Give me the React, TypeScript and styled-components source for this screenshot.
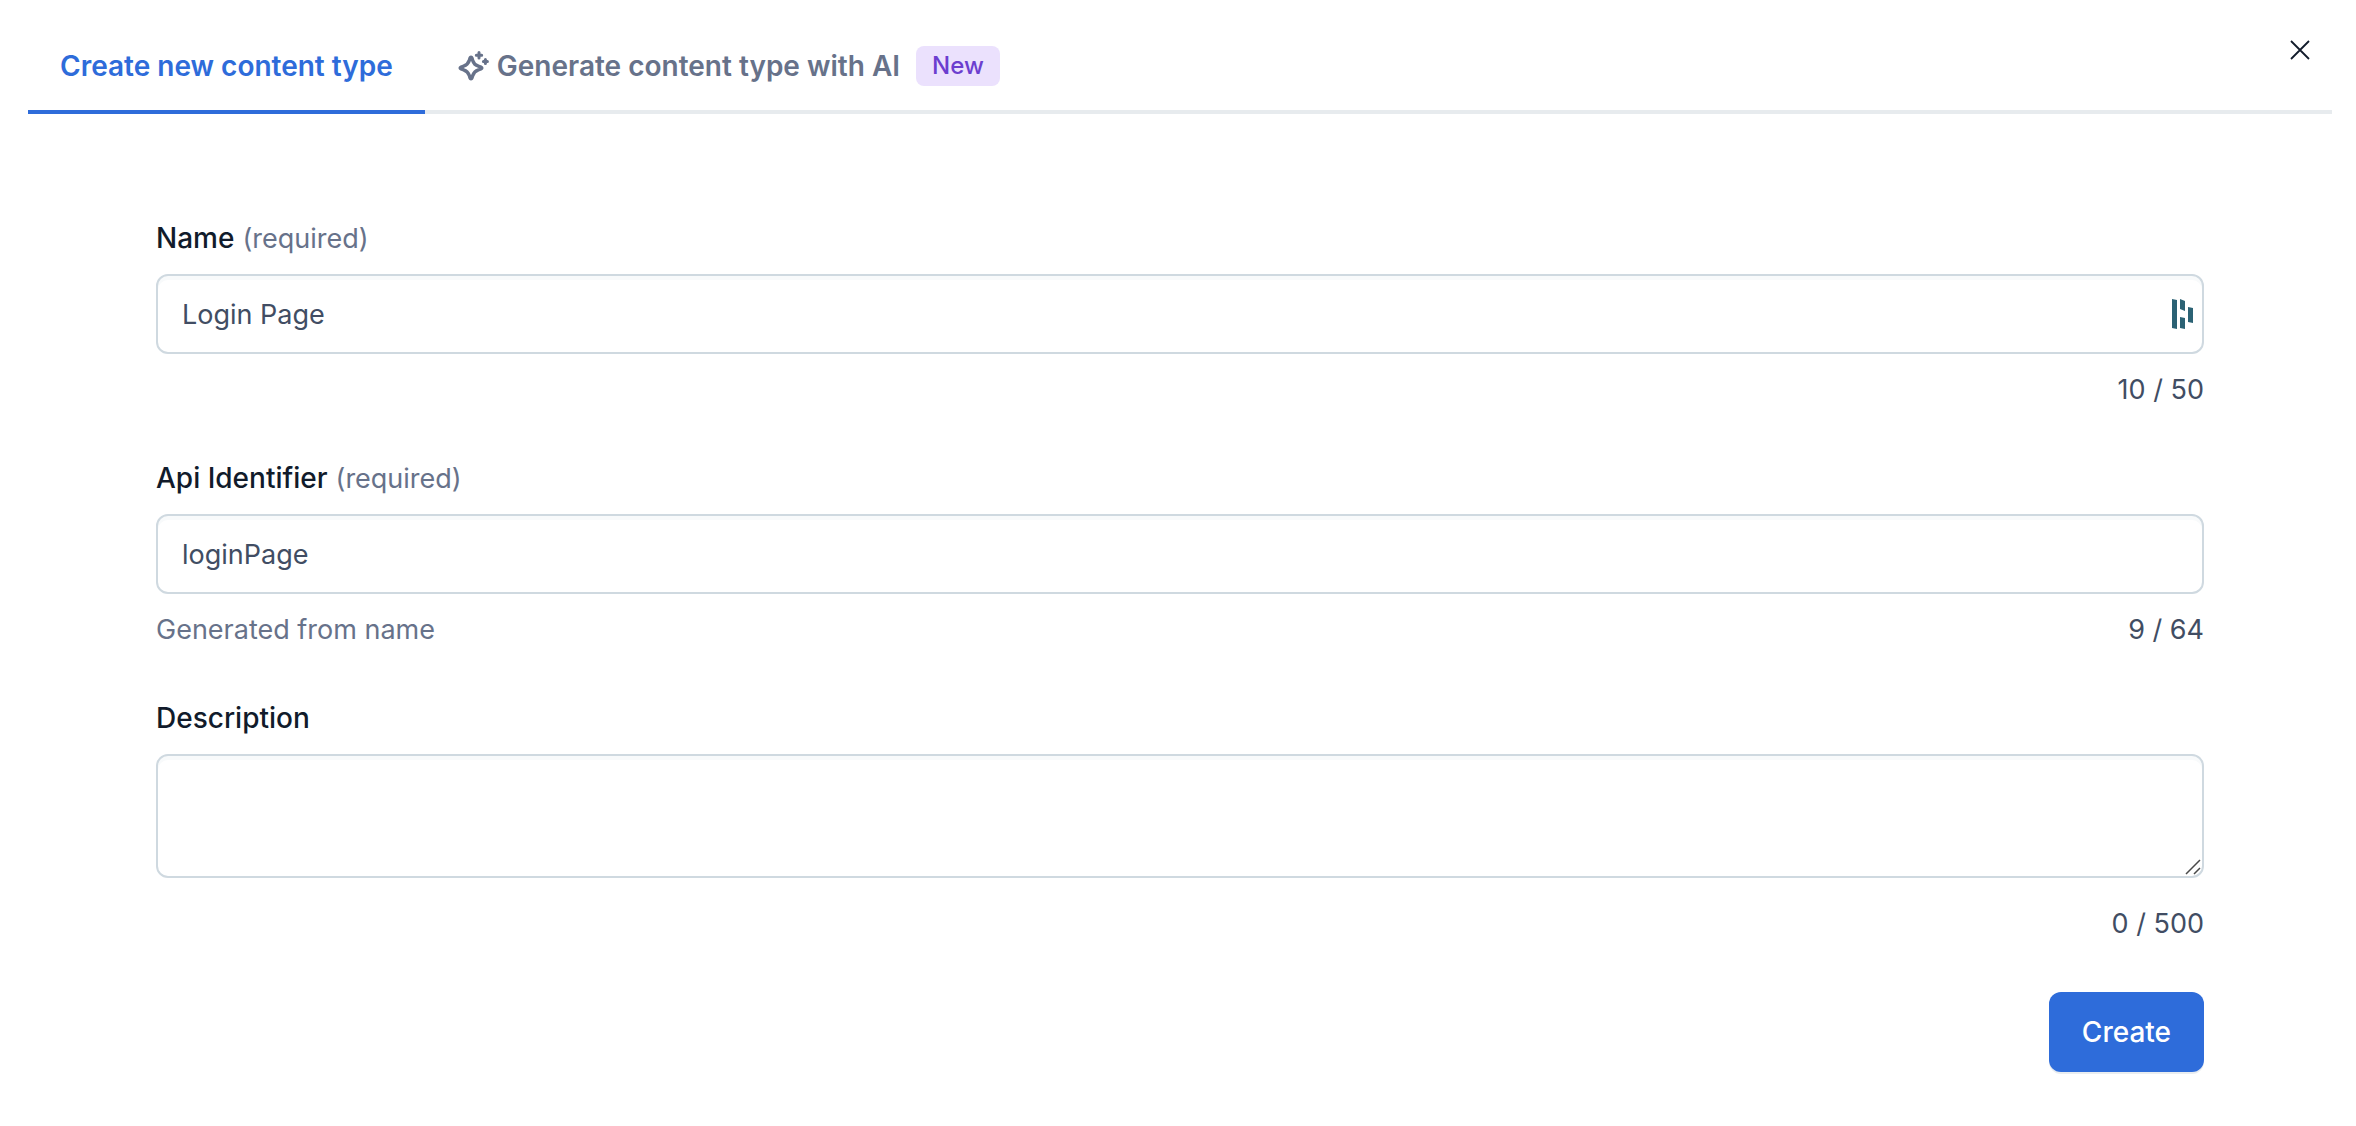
import React, { useState } from "react";
import styled, { createGlobalStyle } from "styled-components";

const colors = {
  blue: "#2e6cda",
  ink: "#111b2b",
  text: "#414d63",
  muted: "#67728a",
  border: "#cfd9e0",
  line: "#e7ebee",
  badge: "#ebe1fd",
  badgeText: "#6c3ecf",
};

const GlobalStyle = createGlobalStyle`
  *, *::before, *::after { box-sizing: border-box; }
  body {
    margin: 0;
    background: #fff;
    color: ${colors.text};
    font-family: Inter, "Liberation Sans", sans-serif;
    font-size: 27px;
    line-height: 40px;
  }
  button, input, textarea { font: inherit; color: inherit; }
`;

const Dialog = styled.main`
  padding: 0 24px 48px 28px;
`;

const Header = styled.header`
  display: flex;
  align-items: flex-start;
  justify-content: space-between;
  padding-top: 18px;
  box-shadow: inset 0 -4px 0 ${colors.line};
`;

const Tabs = styled.div`
  display: flex;
`;

const Tab = styled.button<{ $active?: boolean }>`
  display: flex;
  align-items: center;
  height: 96px;
  padding: 0 32px;
  border: 0;
  background: none;
  font-size: 28px;
  font-weight: 600;
  white-space: nowrap;
  cursor: pointer;
  color: ${(p) => (p.$active ? colors.blue : colors.muted)};
  box-shadow: ${(p) => (p.$active ? `inset 0 -4px 0 ${colors.blue}` : "none")};
`;

const TabIcon = styled.svg`
  width: 32px;
  height: 32px;
  margin-right: 8px;
`;

const Badge = styled.span`
  margin-left: 16px;
  padding: 0 16px;
  border-radius: 8px;
  background: ${colors.badge};
  color: ${colors.badgeText};
  font-size: 24px;
  font-weight: 500;
`;

const CloseButton = styled.button`
  display: grid;
  place-items: center;
  width: 64px;
  height: 64px;
  padding: 0;
  border: 0;
  background: none;
  color: ${colors.ink};
  cursor: pointer;
`;

const Form = styled.form`
  display: flex;
  flex-direction: column;
  gap: 48px;
  padding: 104px 128px 0;
`;

const FieldBox = styled.div`
  display: flex;
  flex-direction: column;
  gap: 16px;
`;

const Label = styled.label`
  color: ${colors.ink};
  font-size: 28px;
  font-weight: 500;
`;

const Required = styled.span`
  margin-left: 8px;
  color: ${colors.muted};
  font-size: 27px;
  font-weight: 400;
  line-height: 32px;
`;

const ControlBox = styled.div`
  position: relative;
  display: flex;
`;

const TextInput = styled.input`
  width: 100%;
  height: 80px;
  padding: 0 24px;
  border: 2px solid ${colors.border};
  border-radius: 12px;
  outline: none;
  background: #fff;
  box-shadow: inset 0 4px 0 #f8fafb;
`;

const TextArea = styled.textarea`
  width: 100%;
  height: 124px;
  margin-bottom: 10px;
  padding: 16px 24px;
  border: 2px solid ${colors.border};
  border-radius: 12px;
  outline: none;
  background: #fff;
  box-shadow: inset 0 4px 0 #f8fafb;
  resize: vertical;

  &::-webkit-resizer {
    display: none;
  }
`;

const ManagerIcon = styled.svg`
  position: absolute;
  right: 8px;
  top: 24px;
  width: 24px;
  height: 32px;
`;

const ResizeGrip = styled.svg`
  position: absolute;
  right: 3px;
  bottom: 13px;
  width: 16px;
  height: 16px;
  pointer-events: none;
`;

const Footnote = styled.div`
  display: flex;
  justify-content: space-between;
`;

const Hint = styled.span`
  color: ${colors.muted};
`;

const SubmitButton = styled.button`
  align-self: flex-end;
  height: 80px;
  padding: 0 33px;
  border: 0;
  border-radius: 12px;
  background: ${colors.blue};
  color: #fff;
  font-size: 28px;
  font-weight: 500;
  box-shadow: 0 2px 0 #e9edf0;
  cursor: pointer;
`;

const Sparkles = () => (
  <TabIcon viewBox="0 1 32 32" fill="none" stroke="currentColor" strokeWidth="3.4" strokeLinecap="round" strokeLinejoin="round" aria-hidden="true">
    <path d="M14 8.2C12.9 8.2 12.9 9.6 12.3 11.4C11.3 14.6 9.8 16.2 6.6 17.2C4.8 17.8 3.2 17.9 3.2 19C3.2 20.1 4.8 20.2 6.6 20.8C9.8 21.8 11.3 23.4 12.3 26.6C12.9 28.4 12.9 29.8 14 29.8C15.1 29.8 15.1 28.4 15.7 26.6C16.7 23.4 18.2 21.8 21.4 20.8C23.2 20.2 24.8 20.1 24.8 19C24.8 17.9 23.2 17.8 21.4 17.2C18.2 16.2 16.7 14.6 15.7 11.4C15.1 9.6 15.1 8.2 14 8.2Z" />
    <path strokeWidth="3" d="M22 3.6V9M19.3 6.3H24.7M28.4 10.6V14.6M26.4 12.6H30.4" />
  </TabIcon>
);

const PasswordManagerMark = () => (
  <ManagerIcon viewBox="0 0 24 32" fill="#2b6274" aria-hidden="true">
    <path d="M0 1L5 2V31L0 30ZM8 1L13 3V13L8 11ZM8 19L13 20V31L8 30ZM16 9L21 10V25L16 24Z" />
  </ManagerIcon>
);

interface FieldProps {
  id: string;
  label: string;
  required?: boolean;
  hint?: string;
  count: number;
  max: number;
  children: React.ReactNode;
}

const Field = ({ id, label, required, hint, count, max, children }: FieldProps) => (
  <FieldBox>
    <Label htmlFor={id}>
      {label}
      {required && <Required>(required)</Required>}
    </Label>
    <ControlBox>{children}</ControlBox>
    <Footnote>
      <Hint>{hint}</Hint>
      <span>{`${count} / ${max}`}</span>
    </Footnote>
  </FieldBox>
);

export default function App() {
  const [name, setName] = useState("Login Page");
  const [apiId, setApiId] = useState("loginPage");
  const [description, setDescription] = useState("");

  return (
    <>
      <GlobalStyle />
      <Dialog>
        <Header>
          <Tabs role="tablist">
            <Tab type="button" role="tab" aria-selected="true" $active>
              Create new content type
            </Tab>
            <Tab type="button" role="tab" aria-selected="false">
              <Sparkles />
              Generate content type with AI
              <Badge>New</Badge>
            </Tab>
          </Tabs>
          <CloseButton type="button" aria-label="Close">
            <svg width="20" height="20" viewBox="0 0 20 20" fill="none" stroke="currentColor" strokeWidth="1.8" aria-hidden="true">
              <path d="M1 1L19 19M19 1L1 19" />
            </svg>
          </CloseButton>
        </Header>
        <Form onSubmit={(e) => e.preventDefault()}>
          <Field id="name" label="Name" required count={name.length} max={50}>
            <TextInput id="name" value={name} maxLength={50} onChange={(e) => setName(e.target.value)} />
            <PasswordManagerMark />
          </Field>
          <Field id="api-id" label="Api Identifier" required hint="Generated from name" count={apiId.length} max={64}>
            <TextInput id="api-id" value={apiId} maxLength={64} onChange={(e) => setApiId(e.target.value)} />
          </Field>
          <Field id="description" label="Description" count={description.length} max={500}>
            <TextArea id="description" value={description} maxLength={500} onChange={(e) => setDescription(e.target.value)} />
            <ResizeGrip viewBox="0 0 16 16" fill="none" stroke="#4a4a4a" strokeWidth="1.5" aria-hidden="true">
              <path d="M1 15L15 1M9 15L15 9" />
            </ResizeGrip>
          </Field>
          <SubmitButton type="submit">Create</SubmitButton>
        </Form>
      </Dialog>
    </>
  );
}
